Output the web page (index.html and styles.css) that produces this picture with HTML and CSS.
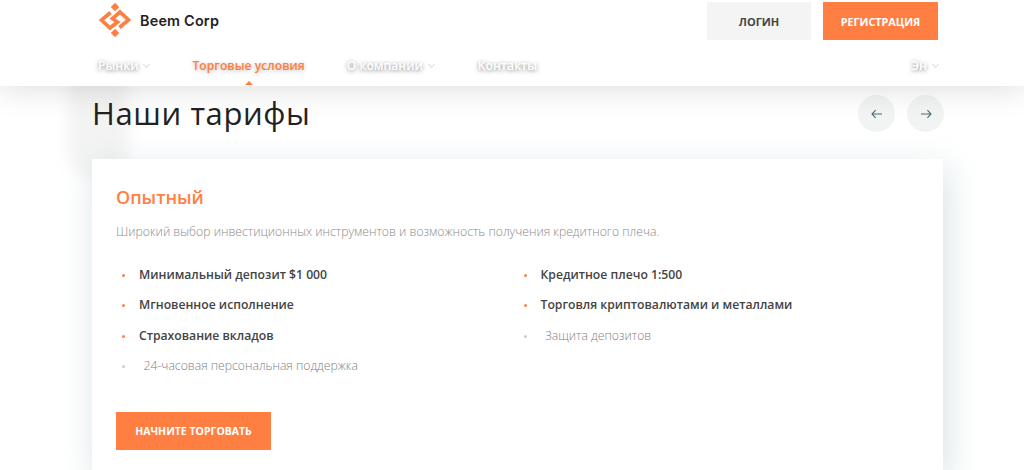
FILE: index.html
```html
<!DOCTYPE html>
<html lang="ru">
<head>
<meta charset="utf-8">
<title>Beem Corp</title>
<link rel="stylesheet" href="styles.css">
</head>
<body>
<header class="header">
  <div class="top-row">
    <a class="logo">
      <svg class="logo-icon" width="34" height="34" viewBox="0 0 34 34">
        <rect x="14" y="1" width="6" height="6" transform="rotate(45 17 4)" fill="#ff7f43"/>
        <rect x="14" y="27" width="6" height="6" transform="rotate(45 17 30)" fill="#ff7f43"/>
        <path d="M12.500 9.500 3.500 17 12 25 19.500 19 14.500 15.500 22 9 30.500 17 21.500 24.500" fill="none" stroke="#ff7f43" stroke-width="3.7"/>
      </svg>
      <span class="logo-text">Beem Corp</span>
    </a>
    <div class="auth">
      <a class="btn btn-light">ЛОГИН</a>
      <a class="btn btn-primary">РЕГИСТРАЦИЯ</a>
    </div>
  </div>
  <nav class="nav">
    <a class="nav-link nav-markets">Рынки<span class="chev"></span></a>
    <a class="nav-link nav-active">Торговые условия</a>
    <a class="nav-link nav-about">О компании<span class="chev"></span></a>
    <a class="nav-link">Контакты</a>
    <a class="nav-link nav-lang">Эн<span class="chev"></span></a>
  </nav>
</header>
<div class="blob"></div>
<main class="main">
  <div class="heading-row">
    <h1 class="heading">Наши тарифы</h1>
    <div class="arrows">
      <button class="arrow" aria-label="Назад">
        <svg width="12" height="10" viewBox="0 0 12 10"><path d="M11 5H1M4.6 1.2 1 5l3.6 3.8" fill="none" stroke="#4d6f78" stroke-width="1.1"/></svg>
      </button>
      <button class="arrow" aria-label="Вперёд">
        <svg width="12" height="10" viewBox="0 0 12 10"><path d="M1 5h10M7.4 1.2 11 5 7.4 8.8" fill="none" stroke="#4d6f78" stroke-width="1.1"/></svg>
      </button>
    </div>
  </div>
  <section class="card">
    <h2 class="card-title">Опытный</h2>
    <p class="card-desc">Широкий выбор инвестиционных инструментов и возможность получения кредитного плеча.</p>
    <div class="features">
      <ul class="feature-list">
        <li class="feature">Минимальный депозит $1 000</li>
        <li class="feature">Мгновенное исполнение</li>
        <li class="feature">Страхование вкладов</li>
        <li class="feature feature-off">24-часовая персональная поддержка</li>
      </ul>
      <ul class="feature-list">
        <li class="feature">Кредитное плечо 1:500</li>
        <li class="feature">Торговля криптовалютами и металлами</li>
        <li class="feature feature-off">Защита депозитов</li>
      </ul>
    </div>
    <a class="btn btn-primary btn-cta">НАЧНИТЕ ТОРГОВАТЬ</a>
  </section>
</main>
</body>
</html>
```

FILE: styles.css
```css
* { box-sizing: border-box; }
html, body { margin: 0; height: 470px; overflow: hidden; }
body {
  position: relative;
  background: #fff;
  font-family: "Open Sans", "Liberation Sans", sans-serif;
  color: #333;
}
.header {
  position: relative;
  z-index: 2;
  height: 86px;
  padding: 2px 86px 0 92px;
  background: #fff;
  box-shadow: 0 4px 30px rgba(0, 0, 0, 0.13);
}
.top-row { display: flex; justify-content: space-between; align-items: flex-start; }
.logo { display: flex; align-items: center; gap: 8px; height: 38px; padding-left: 6px; }
.logo-icon { display: block; margin-top: -2px; }
.logo-text { font-family: Inter, "Open Sans", sans-serif; font-weight: 600; font-size: 14.4px; color: #222; letter-spacing: 0.2px; margin-top: -2px; }
.auth { display: flex; gap: 12px; }
.btn {
  display: flex;
  align-items: center;
  justify-content: center;
  height: 38px;
  font-size: 11px;
  font-weight: 700;
}
.btn-light { width: 104px; background: #f4f4f4; color: #444; }
.btn-primary { width: 115px; background: #ff7f43; color: #fff; font-size: 10.8px; }
.nav { position: relative; display: flex; margin-top: 16px; height: 18px; align-items: center; padding-left: 6px; }
.nav-link {
  display: flex;
  align-items: center;
  font-size: 12.2px;
  font-weight: 600;
  color: #fff;
  text-shadow: 0 1px 4px rgba(0, 0, 0, 0.5);
  white-space: nowrap;
}
.nav-markets { margin-right: 43px; }
.nav-about { margin-left: 42px; margin-right: 44px; }
.nav-active { position: relative; color: #ff7f43; text-shadow: 0 1px 4px rgba(0, 0, 0, 0.3); }
.nav-active::after {
  content: "";
  position: absolute;
  left: 50%;
  bottom: -11px;
  margin-left: -4px;
  border: 4px solid transparent;
  border-top: 0;
  border-bottom-color: #ff7f43;
}
.nav-lang { margin-left: auto; }
.chev {
  width: 5px;
  height: 5px;
  margin: -2px 0 0 6px;
  border-right: 1px solid #ddd;
  border-bottom: 1px solid #ddd;
  transform: rotate(45deg);
}
.blob {
  position: absolute;
  left: 68px;
  top: 70px;
  width: 60px;
  height: 110px;
  background: #f3f3f3;
  border-radius: 0 0 30px 30px;
  filter: blur(7px);
}
.main { position: relative; z-index: 1; padding: 0 80px 0 92px; }
.heading-row { display: flex; justify-content: space-between; align-items: center; height: 73px; }
.heading { margin: 0; font-size: 31px; font-weight: 400; color: #222; letter-spacing: 0.6px; position: relative; top: -10px; }
.arrows { display: flex; gap: 12px; position: relative; top: -9px; }
.arrow {
  display: flex;
  align-items: center;
  justify-content: center;
  width: 37px;
  height: 37px;
  padding: 0;
  border: 0;
  border-radius: 50%;
  background: #f2f3f3;
}
.card {
  width: 851px;
  height: 311px;
  padding: 24px;
  background: #fff;
  box-shadow: 4px 10px 32px rgba(130, 165, 175, 0.32);
}
.card-title { margin: 0; font-size: 18px; line-height: 28px; font-weight: 600; color: #ff7f43; }
.card-desc { margin: 11px 0 0; font-size: 12.2px; line-height: 20px; font-weight: 300; color: #8a8a8a; }
.features { display: flex; margin-top: 18px; }
.feature-list { list-style: none; margin: 0; padding: 0; width: 401.5px; }
.feature {
  position: relative;
  height: 30.3px;
  padding-left: 23px;
  font-size: 12.2px;
  line-height: 30px;
  font-weight: 600;
  color: #444;
}
.feature::before {
  content: "";
  position: absolute;
  left: 6px;
  top: 14px;
  width: 3px;
  height: 3px;
  border-radius: 50%;
  background: #ff7f43;
}
.feature-off { padding-left: 27.5px; font-weight: 300; color: #7f7f7f; }
.feature-off::before { background: #ccc; }
.btn-cta { width: 155px; margin-top: 31px; font-size: 10.5px; }
```
